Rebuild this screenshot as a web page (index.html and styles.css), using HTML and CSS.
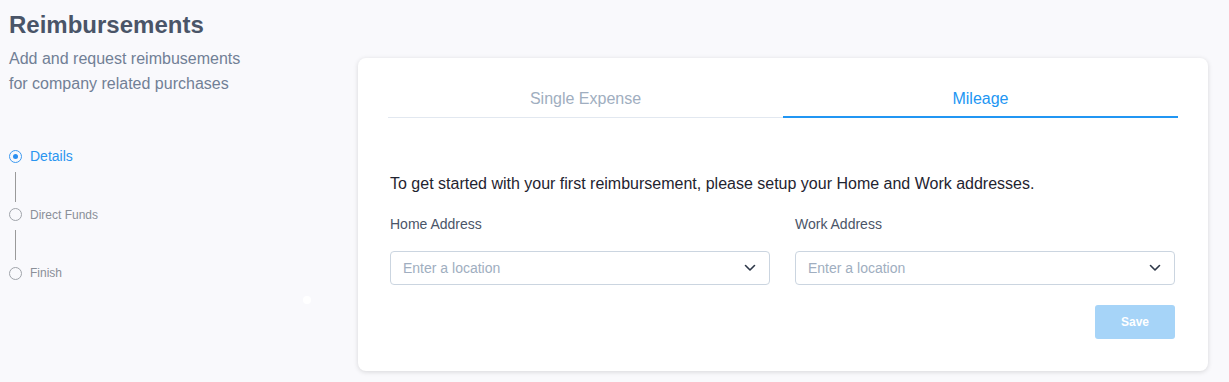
FILE: index.html
```html
<!DOCTYPE html>
<html>
<head>
<meta charset="utf-8">
<link rel="stylesheet" href="styles.css">
</head>
<body>
<div class="page">
  <aside class="side">
    <h1 class="title">Reimbursements</h1>
    <p class="subtitle">Add and request reimbusements<br>for company related purchases</p>
    <ol class="steps">
      <li class="step active"><span class="dot"></span><span class="step-label">Details</span></li>
      <li class="connector"></li>
      <li class="step"><span class="dot"></span><span class="step-label">Direct Funds</span></li>
      <li class="connector"></li>
      <li class="step"><span class="dot"></span><span class="step-label">Finish</span></li>
    </ol>
    <span class="speck"></span>
  </aside>
  <main class="card">
    <div class="tabs">
      <div class="tab">Single Expense</div>
      <div class="tab active">Mileage</div>
    </div>
    <div class="form">
      <p class="intro">To get started with your first reimbursement, please setup your Home and Work addresses.</p>
      <div class="fields">
        <div class="field">
          <label class="label">Home Address</label>
          <div class="select">
            <span class="placeholder">Enter a location</span>
            <svg class="chev" width="12" height="8" viewBox="0 0 12 8"><path d="M1.5 1.5 L6 6 L10.5 1.5" fill="none" stroke="#2d3748" stroke-width="1.6" stroke-linecap="round" stroke-linejoin="round"/></svg>
          </div>
        </div>
        <div class="field">
          <label class="label">Work Address</label>
          <div class="select">
            <span class="placeholder">Enter a location</span>
            <svg class="chev" width="12" height="8" viewBox="0 0 12 8"><path d="M1.5 1.5 L6 6 L10.5 1.5" fill="none" stroke="#2d3748" stroke-width="1.6" stroke-linecap="round" stroke-linejoin="round"/></svg>
          </div>
        </div>
      </div>
      <div class="actions">
        <button class="save">Save</button>
      </div>
    </div>
  </main>
</div>
</body>
</html>
```

FILE: styles.css
```css
html, body {
  margin: 0;
  padding: 0;
  background: #f9f9fc;
  font-family: "Liberation Sans", Arial, sans-serif;
}
.page {
  display: flex;
  align-items: flex-start;
  height: 382px;
  box-sizing: border-box;
}
.side {
  position: relative;
  width: 358px;
  flex: none;
  padding: 11px 0 0 9px;
  box-sizing: border-box;
  height: 382px;
}
.title {
  margin: 0;
  font-size: 24px;
  line-height: 28px;
  font-weight: bold;
  color: #4a5568;
}
.subtitle {
  margin: 7px 0 0;
  font-size: 16px;
  line-height: 25px;
  color: #718096;
}
.steps {
  list-style: none;
  margin: 52px 0 0;
  padding: 0;
  display: flex;
  flex-direction: column;
}
.step {
  display: flex;
  align-items: center;
  height: 16px;
  color: #8a8f98;
  font-size: 12px;
}
.dot {
  width: 13px;
  height: 13px;
  border: 1.5px solid #a0a4aa;
  border-radius: 50%;
  box-sizing: border-box;
  margin-right: 8px;
  position: relative;
  flex: none;
}
.step.active {
  color: #2b95f0;
  font-size: 14px;
}
.step.active .dot {
  border-color: #3d9af0;
}
.step.active .dot::after {
  content: "";
  position: absolute;
  left: 50%;
  top: 50%;
  width: 5px;
  height: 5px;
  margin: -2.5px 0 0 -2.5px;
  border-radius: 50%;
  background: #2b8ff0;
}
.connector {
  width: 1px;
  height: 30px;
  background: #9a9a9a;
  margin: 7.5px 0 5px 6px;
}
.speck {
  position: absolute;
  left: 303px;
  top: 296px;
  width: 8px;
  height: 8px;
  border-radius: 50%;
  background: #ffffff;
}
.card {
  margin-top: 58px;
  width: 850px;
  flex: none;
  background: #ffffff;
  border-radius: 8px;
  box-shadow: 0 1px 5px rgba(0, 0, 0, 0.14);
  padding: 30px 30px 32px;
  box-sizing: border-box;
}
.tabs {
  display: flex;
}
.tab {
  flex: 1;
  text-align: center;
  font-size: 16px;
  line-height: 18px;
  padding: 2px 0 9px;
  color: #a0aec0;
  border-bottom: 1px solid #e2e8f0;
}
.tab.active {
  color: #2196f3;
  border-bottom: 2px solid #2196f3;
  padding-bottom: 8px;
}
.form {
  padding: 0 3px 0 2px;
}
.intro {
  margin: 57px 0 0;
  font-size: 16px;
  line-height: 18px;
  color: #1f2430;
}
.fields {
  display: grid;
  grid-template-columns: 1fr 1fr;
  column-gap: 25px;
  margin-top: 23px;
}
.field {
  display: flex;
  flex-direction: column;
}
.label {
  font-size: 14px;
  line-height: 16px;
  color: #4a5568;
}
.select {
  margin-top: 19px;
  height: 34px;
  border: 1px solid #cbd5e0;
  border-radius: 4px;
  box-sizing: border-box;
  display: flex;
  align-items: center;
  justify-content: space-between;
  padding: 0 13px 0 12px;
}
.placeholder {
  font-size: 14px;
  color: #a0aec0;
}
.chev {
  display: block;
}
.actions {
  display: flex;
  justify-content: flex-end;
  margin-top: 20px;
}
.save {
  width: 80px;
  height: 34px;
  border: none;
  border-radius: 3px;
  background: #a6d4f8;
  color: #ffffff;
  font-family: "Liberation Sans", Arial, sans-serif;
  font-weight: bold;
  font-size: 12px;
}
```
